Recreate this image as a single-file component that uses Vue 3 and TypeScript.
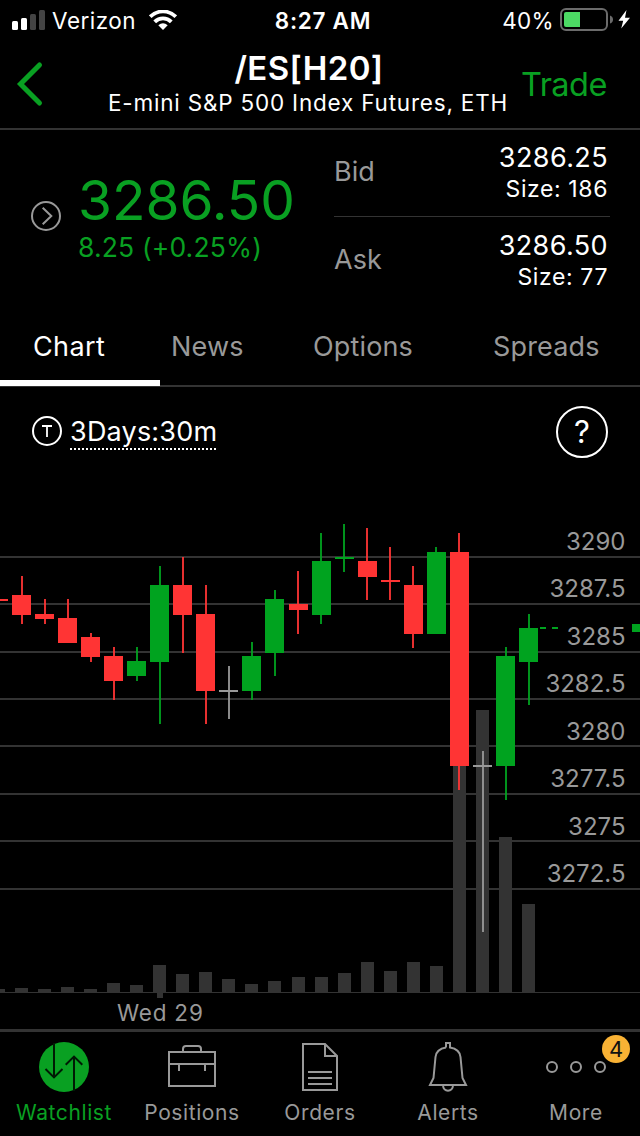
<script setup lang="ts">
type Tone = 'up' | 'down' | 'flat'
type Candle = { tone: Tone; open: number; close: number; high: number; low: number; volume: number }

const c = (tone: Tone, open: number, close: number, high: number, low: number, volume: number): Candle => ({
  tone, open, close, high, low, volume,
})

// Vertical chart coordinates: body top, body bottom, wick top, wick bottom, volume top
const candles: Candle[] = [
  c('down', 595, 615, 576, 624, 988),
  c('down', 614, 619, 599, 624, 989),
  c('down', 618, 643, 599, 643, 987),
  c('down', 637, 657, 633, 662, 989),
  c('down', 656, 681, 647, 700, 983),
  c('up', 661, 676, 647, 681, 985),
  c('up', 585, 662, 566, 724, 965),
  c('down', 585, 615, 557, 653, 974),
  c('down', 614, 691, 585, 724, 972),
  c('flat', 690, 692, 666, 719, 979),
  c('up', 656, 691, 642, 700, 984),
  c('up', 599, 653, 590, 676, 981),
  c('down', 604, 610, 571, 634, 977),
  c('up', 561, 615, 533, 624, 977),
  c('up', 557, 559, 524, 572, 973),
  c('down', 561, 577, 528, 600, 962),
  c('down', 580, 582, 547, 600, 971),
  c('down', 585, 634, 566, 648, 962),
  c('up', 552, 634, 547, 634, 966),
  c('down', 552, 766, 533, 790, 766),
  c('flat', 765, 767, 751, 932, 710),
  c('up', 656, 766, 647, 800, 837),
  c('up', 628, 662, 614, 705, 904),
]
const left = (i: number): number => Math.round(12 + 23.045 * i)
const wickLeft = (i: number): number => Math.floor(21 + 23.05 * i)

const levels = [
  { label: '3290', y: 556, base: 550 },
  { label: '3287.5', y: 603, base: 597 },
  { label: '3285', y: 651, base: 645 },
  { label: '3282.5', y: 698, base: 692 },
  { label: '3280', y: 745, base: 740 },
  { label: '3277.5', y: 793, base: 787 },
  { label: '3275', y: 840, base: 835 },
  { label: '3272.5', y: 888, base: 882 },
]

const quotes = [
  { side: 'Bid', price: '3286.25', size: 186 },
  { side: 'Ask', price: '3286.50', size: 77 },
]
const tabs = ['Chart', 'News', 'Options', 'Spreads']
</script>

<template>
  <div class="screen">
    <div class="status">
      <div class="carrier">
        <svg width="33" height="20" viewBox="0 0 33 20">
          <rect x="0" y="11" width="6" height="9" rx="1.5" fill="#fff" />
          <rect x="9" y="8" width="6" height="12" rx="1.5" fill="#fff" />
          <rect x="18" y="4" width="6" height="16" rx="1.5" fill="#444" />
          <rect x="27" y="0" width="6" height="20" rx="1.5" fill="#444" />
        </svg>
        <span class="carrier-name">Verizon</span>
        <svg class="wifi" width="28" height="20" viewBox="0 0 28 20">
          <g fill="none" stroke="#fff" stroke-width="3.8">
            <path d="M1.2 6.7 A18.2 18.2 0 0 1 26.8 6.7" />
            <path d="M5.7 11.8 A11.7 11.7 0 0 1 22.3 11.8" />
          </g>
          <path d="M9.3 15.2 Q14 11.4 18.7 15.2 L14 20 Z" fill="#fff" />
        </svg>
      </div>
      <div class="clock">8:27 AM</div>
      <div class="power">
        <span class="percent">40%</span>
        <svg width="71" height="24" viewBox="0 0 71 24">
          <rect x="1" y="1" width="46" height="21" rx="5" fill="none" stroke="#6b6b6b" stroke-width="2" />
          <path d="M4 6 Q4 4 6 4 H20 V19 H6 Q4 19 4 17 Z" fill="#4cd964" />
          <path d="M50 7.5 Q53 8.5 53 11.5 Q53 14.5 50 15.5 Z" fill="#6b6b6b" />
          <path d="M66.5 2 L58.5 12.7 H63.2 L61.2 20.5 L70 9.7 H65 Z" fill="#fff" />
        </svg>
      </div>
    </div>

    <header class="nav">
      <svg class="back" width="28" height="46" viewBox="0 0 28 46">
        <path d="M23.5 4 L4.5 23 L23.5 42" fill="none" stroke="#09a022" stroke-width="5" stroke-linecap="round" />
      </svg>
      <div class="heading">
        <div class="symbol">/ES[H20]</div>
        <div class="name">E-mini S&amp;P 500 Index Futures, ETH</div>
      </div>
      <div class="trade">Trade</div>
    </header>

    <section class="quote">
      <svg class="expand" width="32" height="32" viewBox="0 0 32 32" fill="none" stroke="#999" stroke-width="2">
        <circle cx="16" cy="16" r="14" />
        <path d="M12.7 7.7 L21.3 16 L12.7 24.3" />
      </svg>
      <div class="last">
        <div class="price">3286.50</div>
        <div class="change">8.25 (+0.25%)</div>
      </div>
      <div class="book">
        <div v-for="q in quotes" :key="q.side" class="book-row">
          <span class="side">{{ q.side }}</span>
          <div class="book-values">
            <div class="book-price">{{ q.price }}</div>
            <div class="book-size">Size: {{ q.size }}</div>
          </div>
        </div>
      </div>
    </section>

    <nav class="tabs">
      <span v-for="(t, i) in tabs" :key="t" class="tab" :class="{ active: i === 0 }">{{ t }}</span>
    </nav>

    <div class="toolbar">
      <svg class="type" width="32" height="32" viewBox="0 0 32 32" fill="none" stroke="#fff" stroke-width="2">
        <circle cx="16" cy="16" r="14" />
        <path d="M11 11 H21 M16 11 V22" stroke-width="1.8" />
      </svg>
      <div class="period">
        <span class="period-text">3Days:30m</span>
        <svg class="dots" width="148" height="2" viewBox="0 0 148 2">
          <path d="M0 1 H147" stroke="#fff" stroke-width="2" stroke-dasharray="2 2" />
        </svg>
      </div>
      <div class="help">?</div>
    </div>

    <svg class="chart" width="640" height="549" viewBox="0 480 640 549">
      <rect v-for="l in levels" :key="l.label" x="0" :y="l.y" width="640" height="2" fill="#333" />
      <g fill="#333">
        <rect x="0" y="989" width="5" height="3" />
        <rect v-for="(k, i) in candles" :key="i" :x="left(i) + 3" :y="k.volume" width="13" :height="992 - k.volume" />
        <rect x="0" y="992" width="640" height="1" />
        <rect x="157" y="992" width="6" height="6" />
      </g>
      <rect x="0" y="599" width="8" height="2" class="down" />
      <g v-for="(k, i) in candles" :key="'c' + i" :class="k.tone">
        <rect class="wick" :x="wickLeft(i)" :y="k.high" width="2" :height="k.low - k.high" />
        <rect :x="left(i)" :y="k.open" width="19" :height="k.close - k.open" />
      </g>
      <g class="up">
        <rect x="540" y="627" width="6" height="2" />
        <rect x="552" y="627" width="6" height="2" />
        <rect x="632" y="624" width="8" height="8" />
      </g>
      <text v-for="l in levels" :key="'t' + l.label" class="axis" x="625.5" :y="l.base" text-anchor="end">{{ l.label }}</text>
      <text class="axis date" x="160.3" y="1021" text-anchor="middle">Wed 29</text>
    </svg>

    <footer class="bottom">
      <div class="item selected">
        <svg width="64" height="64" viewBox="0 0 64 64">
          <circle cx="32" cy="32" r="25" fill="#09a022" />
          <path d="M22 8 V42 M13.5 34 L22 42.4 L30.5 34 M42 56 V22 M33.7 29.8 L42 21.6 L50.3 29.8" fill="none" stroke="#001a04" stroke-width="2" />
        </svg>
        <span>Watchlist</span>
      </div>
      <div class="item positions">
        <svg width="64" height="64" viewBox="0 0 64 64">
          <path d="M9 17 H55 V51 H9 Z M9 29 H55 M19 29 V36 M45 29 V36 M23 17 V14 Q23 11 26 11 H38 Q41 11 41 14 V17" />
        </svg>
        <span>Positions</span>
      </div>
      <div class="item">
        <svg width="64" height="64" viewBox="0 0 64 64">
          <path d="M15 9 H37 L49 21 V55 H15 Z M37 9 V21 H49 M20 37 H44 M20 43 H44 M20 49 H44" />
        </svg>
        <span>Orders</span>
      </div>
      <div class="item alerts">
        <svg width="64" height="64" viewBox="0 0 64 64">
          <path d="M30 12.5 V8 H34 V12.5 C40 13.5 44 17 44.5 22 L46.5 43 L50 50 H14 L17.5 43 L19.5 22 C20 17 24 13.5 30 12.5 M27 50 C27 57.5 37 57.5 37 50" />
        </svg>
        <span>Alerts</span>
      </div>
      <div class="item">
        <svg width="64" height="64" viewBox="0 0 64 64">
          <circle cx="8" cy="32" r="5" />
          <circle cx="32" cy="32" r="5" />
          <circle cx="56" cy="32" r="5" />
        </svg>
        <span>More</span>
        <b class="badge">4</b>
      </div>
    </footer>
  </div>
</template>

<style>
html,
body {
  background: #000;
}
</style>

<style scoped>
.screen {
  width: 640px;
  height: 1136px;
  overflow: hidden;
  background: #000;
  color: #fff;
  font-family: Inter, "Liberation Sans", sans-serif;
  white-space: nowrap;
  display: flex;
  flex-direction: column;
}
svg {
  display: block;
  flex: none;
}
.status {
  height: 40px;
  display: grid;
  grid-template-columns: 262px 122px 256px;
  font-size: 22.5px;
  line-height: 42px;
}
.carrier {
  display: flex;
  align-items: center;
  height: 40px;
  padding-left: 12px;
}
.carrier-name {
  width: 97px;
  margin-left: 7px;
  letter-spacing: 0.5px;
  padding-top: 1px;
}
.clock {
  text-align: center;
  font-weight: 600;
  letter-spacing: 0.7px;
}
.power {
  display: flex;
  justify-content: flex-end;
  align-items: center;
  height: 40px;
  padding-right: 9px;
}
.percent {
  margin-right: 6px;
  padding-top: 1px;
  letter-spacing: 0.3px;
}
.nav {
  height: 88px;
  display: grid;
  grid-template-columns: 96px 424px 1fr;
  border-bottom: 2px solid #333;
}
.back {
  margin: 21px 0 0 16px;
}
.heading {
  padding-top: 8px;
  text-align: center;
}
.symbol {
  padding-left: 2px;
  font-size: 33px;
  line-height: 40px;
  font-weight: 600;
  letter-spacing: 0.4px;
}
.name {
  margin-top: 2px;
  font-size: 22.5px;
  line-height: 26px;
  letter-spacing: 0.8px;
}
.trade {
  padding: 25px 0 0 1px;
  font-size: 32.5px;
  line-height: 40px;
  letter-spacing: -0.5px;
  color: #09a022;
}
.quote {
  height: 180px;
  display: flex;
}
.expand {
  margin: 70px 0 0 30px;
}
.last {
  width: 256px;
  padding: 40px 0 0 16px;
  box-sizing: border-box;
  color: #09a022;
}
.price {
  font-size: 55px;
  line-height: 60px;
}
.change {
  margin-top: 1px;
  font-size: 26.5px;
  line-height: 32px;
  letter-spacing: 0.15px;
}
.book {
  width: 276px;
  margin-left: 16px;
}
.book-row {
  display: flex;
  justify-content: space-between;
  padding: 12px 2px 13px 0;
}
.book-row + .book-row {
  border-top: 1px solid #333;
}
.book-row + .book-row {
  padding-top: 13px;
}
.side {
  padding-top: 14px;
  font-size: 27px;
  line-height: 32px;
  color: #999;
}
.book-values {
  text-align: right;
}
.book-price {
  font-size: 27px;
  line-height: 32px;
  letter-spacing: 0.4px;
}
.book-size {
  margin-top: 1px;
  font-size: 23px;
  line-height: 28px;
  letter-spacing: 0.6px;
}
.tabs {
  position: relative;
  height: 75px;
  display: grid;
  grid-template-columns: 138px 142px 180px 1fr;
  padding-left: 33px;
  border-bottom: 2px solid #333;
  color: #999;
}
.tabs::after {
  content: "";
  position: absolute;
  left: 0;
  bottom: -1px;
  width: 160px;
  height: 6px;
  background: #fff;
}
.tab {
  padding-top: 21px;
  font-size: 27px;
  line-height: 32px;
  letter-spacing: 0.15px;
}
.active {
  color: #fff;
  letter-spacing: 0.4px;
}
.toolbar {
  height: 93px;
  display: flex;
}
.type {
  margin: 28px 0 0 31px;
}
.period {
  margin: 29px 0 0 7px;
}
.period-text {
  display: block;
  font-size: 27px;
  line-height: 32px;
  letter-spacing: 0.2px;
}
.help {
  width: 48px;
  height: 48px;
  margin: 19px 32px 0 auto;
  border: 2px solid #fff;
  border-radius: 50%;
  text-align: center;
  font-size: 31px;
  line-height: 48px;
}
.chart {
  height: 549px;
}
.up {
  fill: #00a31f;
}
.down {
  fill: #ff3434;
}
.flat {
  fill: #999;
}
.wick {
  opacity: 0.9;
}
.axis {
  font-size: 24px;
  fill: #999;
}
.date {
  font-size: 22.5px;
  letter-spacing: 0.8px;
}
.bottom {
  height: 104px;
  display: grid;
  grid-template-columns: repeat(5, 128px);
  border-top: 3px solid #333;
  color: #999;
  font-size: 21px;
  line-height: 26px;
}
.item {
  position: relative;
  display: flex;
  flex-direction: column;
  align-items: center;
  padding-top: 3px;
}
.item svg {
  fill: none;
  stroke: #999;
  stroke-width: 2;
}
.selected svg {
  stroke: none;
}
.item span {
  padding-top: 1px;
  letter-spacing: 0.6px;
}
.selected {
  color: #09a022;
}
.badge {
  position: absolute;
  left: 90px;
  top: 3px;
  width: 28px;
  height: 28px;
  border-radius: 50%;
  background: #f9b234;
  color: #111;
  font-size: 22px;
  font-weight: 400;
  line-height: 28px;
  text-align: center;
}
</style>
